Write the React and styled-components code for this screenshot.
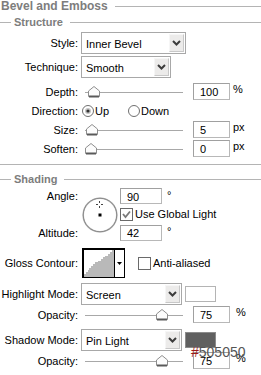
import React from "react";
import styled, { createGlobalStyle } from "styled-components";

const GlobalStyle = createGlobalStyle`
  html, body {
    margin: 0;
    padding: 0;
    background: #ffffff;
  }
  body {
    font-family: "Liberation Sans", Arial, sans-serif;
    font-size: 11px;
    color: #000000;
  }
`;

const Chevron = () => (
  <svg width="9" height="6" viewBox="0 0 9 6">
    <polyline points="1,1 4.5,4.5 8,1" fill="none" stroke="#3c3c3c" strokeWidth="2" />
  </svg>
);

const ThumbIcon = () => (
  <svg width="12" height="12" viewBox="0 0 12 12">
    <polygon points="0.5,10.5 0.5,5 6,0.5 11.5,5 11.5,10.5" fill="#fcfcfc" stroke="#8e8e8e" />
    <rect x="1" y="9.5" width="10" height="2" fill="#5a5a5a" />
  </svg>
);

const RadioIcon = ({ checked }) => (
  <svg width="12" height="12" viewBox="0 0 12 12">
    <circle cx="6" cy="6" r="5.5" fill="#fff" stroke="#6f6f6f" />
    {checked && <circle cx="6" cy="6" r="3" fill="#c4c4c4" />}
    {checked && <circle cx="6" cy="6" r="1.6" fill="#333" />}
  </svg>
);

const CheckIcon = ({ checked }) => (
  <svg width="13" height="13" viewBox="0 0 13 13">
    <rect x="0.5" y="0.5" width="12" height="12" fill="#fff" stroke="#6a6a6a" />
    {checked && (
      <polyline points="3,6 5.5,9 10,3.5" fill="none" stroke="#7a7a7a" strokeWidth="1.8" />
    )}
  </svg>
);

const Section = ({ title }) => <Group>{title}</Group>;

const Select = ({ width, value }) => (
  <SelectBox $w={width}>
    <SelectText>{value}</SelectText>
    <SelectArrow>
      <Chevron />
    </SelectArrow>
  </SelectBox>
);

const Slider = ({ pos }) => (
  <Track>
    <Thumb $pos={pos}>
      <ThumbIcon />
    </Thumb>
  </Track>
);

const App = () => {
  return (
    <Panel>
      <GlobalStyle />
      <Title>Bevel and Emboss</Title>
      <Section title="Structure" />

      <Row $h={22} $mt={4}>
        <Label>Style:</Label>
        <Select width={105} value="Inner Bevel" />
      </Row>
      <Row $h={22} $mt={2}>
        <Label>Technique:</Label>
        <Select width={90} value="Smooth" />
      </Row>
      <Row $mt={4}>
        <Label>Depth:</Label>
        <Slider pos={3} />
        <NumBox>100</NumBox>
        <Unit>%</Unit>
      </Row>
      <Row>
        <Label>Direction:</Label>
        <Radio>
          <RadioIcon checked />
          <span>Up</span>
        </Radio>
        <Radio $ml={19}>
          <RadioIcon />
          <span>Down</span>
        </Radio>
      </Row>
      <Row>
        <Label>Size:</Label>
        <Slider pos={1} />
        <NumBox>5</NumBox>
        <Unit>px</Unit>
      </Row>
      <Row>
        <Label>Soften:</Label>
        <Slider pos={0} />
        <NumBox>0</NumBox>
        <Unit>px</Unit>
      </Row>

      <Separator />
      <Section title="Shading" />

      <AngleGrid>
        <GridLabel $row={1}>Angle:</GridLabel>
        <Dial>
          <svg width="36" height="36" viewBox="0 0 36 36">
            <circle cx="18" cy="18" r="16.8" fill="#fff" stroke="#bdbdbd" strokeWidth="1.6" />
            <circle cx="18" cy="18" r="16.8" fill="none" stroke="#7a7a7a" strokeWidth="0.8" />
            <rect x="17" y="4" width="1" height="2" fill="#444" />
            <rect x="17" y="9" width="1" height="2" fill="#444" />
            <rect x="14" y="7" width="2" height="1" fill="#444" />
            <rect x="19" y="7" width="2" height="1" fill="#444" />
            <rect x="16.5" y="16.5" width="3" height="3" fill="#000" />
          </svg>
        </Dial>
        <GridCell $row={1}>
          <NumBox $w={42} $h={16} $ml={0}>90</NumBox>
          <Unit $ml={5}>°</Unit>
        </GridCell>
        <GridCell $row={2}>
          <Check>
            <CheckIcon checked />
            <span>Use Global Light</span>
          </Check>
        </GridCell>
        <GridLabel $row={3}>Altitude:</GridLabel>
        <GridCell $row={3}>
          <NumBox $w={42} $h={16} $ml={0}>42</NumBox>
          <Unit $ml={5}>°</Unit>
        </GridCell>
      </AngleGrid>

      <Row $h={30} $mt={7}>
        <Label>Gloss Contour:</Label>
        <ContourBox>
          <ContourCurve>
            <svg width="30" height="28" viewBox="0 0 30 28">
              <polygon
                points="0,28 0,25 2,25 2,23 4,23 4,21 5,21 5,19 7,19 7,17 9,17 9,15 11,15 11,13 14,13 14,12 17,12 17,10 19,10 19,8 21,8 21,7 24,7 24,5 26,5 26,3 28,3 28,1 30,1 30,28"
                fill="#b9b9b9"
              />
            </svg>
          </ContourCurve>
          <ContourArrow>
            <svg width="5" height="3" viewBox="0 0 5 3">
              <polygon points="0,0 5,0 2.5,3" fill="#000" />
            </svg>
          </ContourArrow>
        </ContourBox>
        <Check $ml={13}>
          <CheckIcon />
          <span>Anti-aliased</span>
        </Check>
      </Row>

      <Row $h={22} $mt={5}>
        <Label>Highlight Mode:</Label>
        <Select width={101} value="Screen" />
        <Swatch $fill="#ffffff" $border="#b4b4b4" />
      </Row>
      <Row>
        <Label>Opacity:</Label>
        <Slider pos={71} />
        <NumBox>75</NumBox>
        <Unit $ml={6}>%</Unit>
      </Row>
      <Row $h={22} $mt={5}>
        <Label>Shadow Mode:</Label>
        <Select width={101} value="Pin Light" />
        <SwatchWrap>
          <Swatch $fill="#606060" $border="#8c8c8c" />
          <ColorTag>
            <Hash>#</Hash>505050
          </ColorTag>
        </SwatchWrap>
      </Row>
      <Row>
        <Label>Opacity:</Label>
        <Slider pos={71} />
        <NumBox>75</NumBox>
        <Unit $ml={6}>%</Unit>
      </Row>
    </Panel>
  );
};

//styled components
const Panel = styled.div`
  width: 261px;
  height: 375px;
  overflow: hidden;
`;

const Title = styled.div`
  display: flex;
  align-items: center;
  height: 12px;
  padding-left: 1px;
  font-size: 12px;
  font-weight: bold;
  color: #7d7d7d;
  white-space: nowrap;
  &::after {
    content: "";
    flex: 1;
    height: 1px;
    margin-left: 7px;
    background: #b4b4b4;
  }
`;

const Group = styled.div`
  display: flex;
  align-items: center;
  height: 12px;
  margin-top: ${(p) => (p.children === "Shading" ? 8 : 4)}px;
  font-size: 11px;
  font-weight: bold;
  color: #7d7d7d;
  white-space: nowrap;
  &::before {
    content: "";
    width: 11px;
    height: 1px;
    margin-right: 3px;
    background: #b4b4b4;
  }
  &::after {
    content: "";
    flex: 1;
    height: 1px;
    margin-left: 7px;
    background: #b4b4b4;
  }
`;

const Separator = styled.div`
  height: 1px;
  margin-top: 6px;
  background: #b4b4b4;
`;

const Row = styled.div`
  display: flex;
  align-items: center;
  height: ${(p) => p.$h || 19}px;
  margin-top: ${(p) => p.$mt || 0}px;
`;

const Label = styled.div`
  flex-shrink: 0;
  width: 78px;
  margin-right: 3px;
  text-align: right;
  white-space: nowrap;
`;

const SelectBox = styled.div`
  display: flex;
  width: ${(p) => p.$w}px;
  height: 22px;
  box-sizing: border-box;
  border: 1px solid #a8a8a8;
  background: #fff;
`;

const SelectText = styled.div`
  flex: 1;
  display: flex;
  align-items: center;
  padding: 1px 0 0 4px;
  white-space: nowrap;
`;

const SelectArrow = styled.div`
  display: flex;
  align-items: center;
  justify-content: center;
  width: 15px;
  margin: 1px;
  box-sizing: border-box;
  background: #ecebea;
  border: 1px solid #f6f6f6;
  border-right-color: #c8c8c8;
  border-bottom-color: #c8c8c8;
`;

const Track = styled.div`
  position: relative;
  flex-shrink: 0;
  width: 98px;
  height: 12px;
  margin-left: 4px;
  &::before {
    content: "";
    position: absolute;
    left: 0;
    right: 0;
    top: 6px;
    height: 1px;
    background: #a8a8a8;
  }
`;

const Thumb = styled.div`
  position: absolute;
  top: 0;
  left: ${(p) => p.$pos}px;
  width: 12px;
  height: 12px;
  line-height: 0;
`;

const NumBox = styled.div`
  display: flex;
  align-items: center;
  flex-shrink: 0;
  width: ${(p) => p.$w || 37}px;
  height: ${(p) => p.$h || 17}px;
  box-sizing: border-box;
  margin-left: ${(p) => (p.$ml === undefined ? 10 : p.$ml)}px;
  padding: 1px 0 0 6px;
  border: 1px solid #b8b8b8;
  border-top-color: #a0a0a0;
  border-left-color: #a0a0a0;
  background: #fff;
`;

const Unit = styled.span`
  align-self: flex-start;
  margin-left: ${(p) => p.$ml || 3}px;
  margin-top: 1px;
`;

const Radio = styled.div`
  display: flex;
  align-items: center;
  gap: 1px;
  margin-left: ${(p) => p.$ml || 1}px;
  svg {
    display: block;
  }
`;

const Check = styled.div`
  display: flex;
  align-items: center;
  gap: 2px;
  margin-left: ${(p) => p.$ml || 0}px;
  white-space: nowrap;
  svg {
    display: block;
  }
`;

const AngleGrid = styled.div`
  display: grid;
  grid-template-columns: 78px 36px auto;
  grid-template-rows: 16px 20px 17px;
  margin-top: 3px;
`;

const GridLabel = styled.div`
  grid-column: 1;
  grid-row: ${(p) => p.$row};
  display: flex;
  align-items: center;
  justify-content: flex-end;
  white-space: nowrap;
`;

const GridCell = styled.div`
  grid-column: 3;
  grid-row: ${(p) => p.$row};
  display: flex;
  align-items: center;
  margin-left: 6px;
`;

const Dial = styled.div`
  grid-column: 2;
  grid-row: 1 / 4;
  align-self: center;
  margin-left: 4px;
  line-height: 0;
`;

const ContourBox = styled.div`
  display: flex;
  width: 43px;
  height: 30px;
  box-sizing: border-box;
  margin-left: 1px;
  border: 1px solid #000;
  border-left-width: 2px;
  border-top-width: 2px;
  background: #fff;
`;

const ContourCurve = styled.div`
  width: 30px;
  line-height: 0;
  align-self: flex-end;
`;

const ContourArrow = styled.div`
  display: flex;
  align-items: center;
  justify-content: center;
  flex: 1;
  border-left: 1px solid #000;
  line-height: 0;
`;

const SwatchWrap = styled.div`
  position: relative;
  display: flex;
`;

const Swatch = styled.div`
  width: 31px;
  height: 16px;
  margin-left: 3px;
  box-sizing: border-box;
  background: ${(p) => p.$fill};
  border: 1px solid ${(p) => p.$border};
`;

const ColorTag = styled.div`
  position: absolute;
  left: 9px;
  top: 13px;
  font-family: "Liberation Sans", Arial, sans-serif;
  font-size: 14px;
  line-height: 14px;
  color: #555555;
  white-space: nowrap;
`;

const Hash = styled.span`
  color: #9c1a1a;
`;

export default App;
